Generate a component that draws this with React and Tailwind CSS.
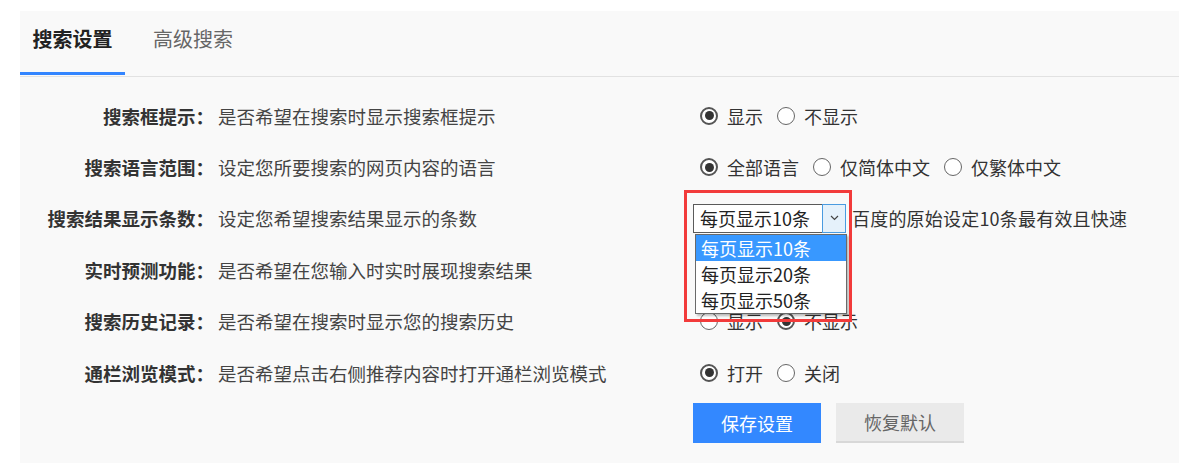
import { useState } from "react";

const font = "font-['Noto_Sans_CJK_SC','Noto_Sans',sans-serif]";

function Radio({ checked, label }) {
  return (
    <span className="inline-flex items-center">
      <span
        className={`flex size-[18px] items-center justify-center rounded-full bg-white ${checked ? "border-2 border-[#555]" : "border-[1.5px] border-[#666]"}`}
      >
        {checked && <span className="size-[9px] rounded-full bg-[#333]" />}
      </span>
      <span className="ml-[9px] text-[#333]">{label}</span>
    </span>
  );
}

function RadioGroup({ options, value }) {
  return (
    <div className="flex items-center gap-[14px] pl-[7px]">
      {options.map((opt) => (
        <Radio key={opt} label={opt} checked={opt === value} />
      ))}
    </div>
  );
}

function Row({ label, desc, children }) {
  return (
    <div className="grid h-[51.4px] grid-cols-[194px_479px_1fr] items-center">
      <span className="text-right text-[18.5px] font-bold text-[#333]">{label}</span>
      <span className="pl-[4px] text-[18.5px] text-[#444]">{desc}</span>
      <div className="flex items-center">{children}</div>
    </div>
  );
}

function CountSelect() {
  const [open] = useState(true);
  const options = ["每页显示10条", "每页显示20条", "每页显示50条"];

  return (
    <div className="relative flex h-[29px] w-[153px]">
      <div className="flex flex-1 items-center border border-r-0 border-[#5a5a5a] bg-white pl-[6px] text-[#222]">
        每页显示10条
      </div>
      <div className="flex w-[24px] items-center justify-center border border-[#4a9be0] bg-[#e5f1fb]">
        <svg width="9" height="6" viewBox="0 0 9 6" fill="none">
          <path d="M1 1l3.5 3.5L8 1" stroke="#444" strokeWidth="1.2" />
        </svg>
      </div>

      {open && (
        <ul className="absolute left-[2px] top-[30px] z-10 w-[152px] border border-[#6a6a6a] bg-white shadow-[2px_2px_2px_rgba(0,0,0,0.25)]">
          {options.map((opt, i) => (
            <li
              key={opt}
              className={`flex h-[26px] items-center pl-[5px] ${i === 0 ? "bg-[#3898ff] text-white" : "text-[#222]"}`}
            >
              {opt}
            </li>
          ))}
        </ul>
      )}

      <div className="absolute -left-[9px] -top-[14px] z-20 h-[132px] w-[168px] border-[3px] border-[#f23b3b]" />
    </div>
  );
}

export default function App() {
  return (
    <div className={`min-h-[463px] bg-white pl-[20px] pt-[11px] text-[18px] leading-[24px] ${font}`}>
      <div className="h-[452px] bg-[#f9f9f9]">
        <div className="flex h-[66px] items-stretch border-b border-[#e2e2e2]">
          <div className="mb-[1px] flex w-[105px] items-center justify-center border-b-[3px] border-[#3385ff] pb-[6px] text-[20px] font-bold text-[#222]">
            搜索设置
          </div>
          <div className="ml-[28px] flex items-center pb-[9px] text-[20px] text-[#666]">
            高级搜索
          </div>
        </div>

        <div className="pt-[13px]">
          <Row label="搜索框提示：" desc="是否希望在搜索时显示搜索框提示">
            <RadioGroup options={["显示", "不显示"]} value="显示" />
          </Row>
          <Row label="搜索语言范围：" desc="设定您所要搜索的网页内容的语言">
            <RadioGroup options={["全部语言", "仅简体中文", "仅繁体中文"]} value="全部语言" />
          </Row>
          <Row label="搜索结果显示条数：" desc="设定您希望搜索结果显示的条数">
            <CountSelect />
            <span className="ml-[6px] tracking-[0.2px] text-[#333]">百度的原始设定10条最有效且快速</span>
          </Row>
          <Row label="实时预测功能：" desc="是否希望在您输入时实时展现搜索结果">
            <RadioGroup options={["开启", "关闭"]} value="开启" />
          </Row>
          <Row label="搜索历史记录：" desc="是否希望在搜索时显示您的搜索历史">
            <RadioGroup options={["显示", "不显示"]} value="不显示" />
          </Row>
          <Row label="通栏浏览模式：" desc="是否希望点击右侧推荐内容时打开通栏浏览模式">
            <RadioGroup options={["打开", "关闭"]} value="打开" />
          </Row>

          <div className="mt-[5px] flex gap-[15px] pl-[673px]">
            <button className="h-[40px] w-[128px] bg-[#3388ff] text-white">保存设置</button>
            <button className="h-[40px] w-[128px] border-b-2 border-[#d8d8d8] bg-[#eaeaea] text-[#666]">
              恢复默认
            </button>
          </div>
        </div>
      </div>
    </div>
  );
}
